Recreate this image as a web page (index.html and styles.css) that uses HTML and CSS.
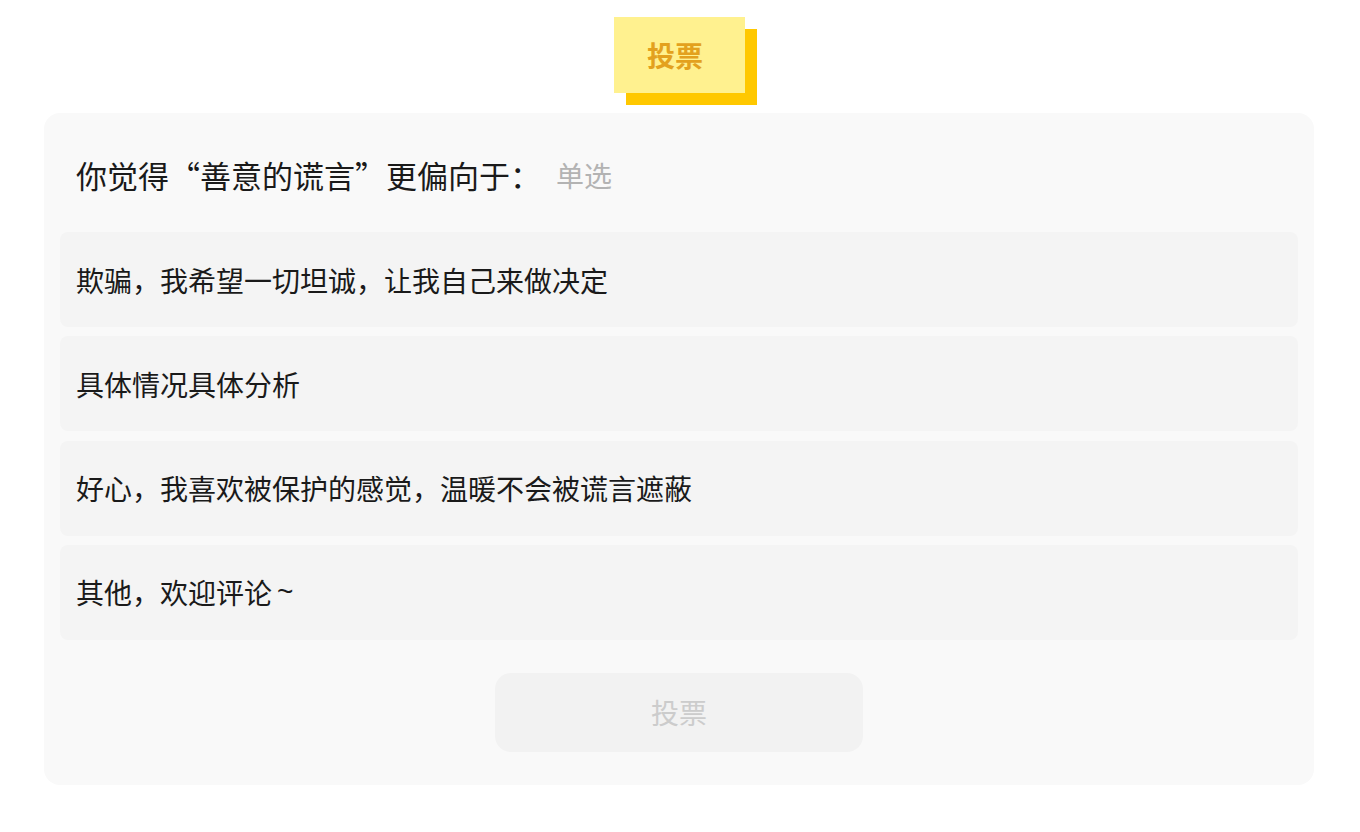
FILE: index.html
```html
<!DOCTYPE html>
<html lang="zh-CN">
<head>
<meta charset="utf-8">
<title>投票</title>
<link rel="stylesheet" href="styles.css">
</head>
<body>
<div class="page">
  <div class="badge-wrap">
    <div class="badge">投票</div>
  </div>
  <div class="card">
    <div class="title-row">
      <span class="title">你觉得“善意的谎言”更偏向于：</span>
      <span class="tag">单选</span>
    </div>
    <div class="options">
      <div class="option">欺骗，我希望一切坦诚，让我自己来做决定</div>
      <div class="option">具体情况具体分析</div>
      <div class="option">好心，我喜欢被保护的感觉，温暖不会被谎言遮蔽</div>
      <div class="option">其他，欢迎评论<span class="tilde">~</span></div>
    </div>
    <div class="actions">
      <button class="vote-btn" type="button">投票</button>
    </div>
  </div>
</div>
</body>
</html>
```
FILE: styles.css
```css
html, body {
  margin: 0;
  padding: 0;
  background: #ffffff;
}
body {
  font-family: "Liberation Sans", "Noto Sans CJK SC", sans-serif;
  color: #1a1a1a;
}
.page {
  padding: 17px 46px 0 44px;
}
.badge-wrap {
  display: flex;
  justify-content: center;
  padding-bottom: 20px;
}
.badge {
  width: 131px;
  height: 76px;
  box-sizing: border-box;
  padding-right: 8px;
  background: #fff18f;
  box-shadow: 12px 12px 0 #ffc800;
  display: flex;
  align-items: center;
  justify-content: center;
  font-size: 28px;
  font-weight: 700;
  color: #e3a11e;
  font-family: "Noto Sans CJK SC", sans-serif;
}
.card {
  background: #f9f9f9;
  border-radius: 16px;
  padding: 0 16px 33px;
}
.title-row {
  display: flex;
  align-items: center;
  height: 119px;
  padding-left: 16px;
  padding-top: 4px;
  box-sizing: border-box;
}
.title {
  font-family: "Noto Sans CJK SC", sans-serif;
  font-size: 31px;
  color: #1a1a1a;
}
.tag {
  margin-left: 15px;
  font-family: "Noto Sans CJK SC", sans-serif;
  font-size: 28px;
  color: #b3b3b3;
}
.options {
  display: flex;
  flex-direction: column;
  gap: 9.33px;
}
.option {
  height: 95px;
  background: #f4f4f4;
  border-radius: 8px;
  display: flex;
  align-items: center;
  padding-left: 16px;
  font-size: 28px;
  color: #1a1a1a;
}
.tilde {
  margin-left: 5px;
}
.actions {
  display: flex;
  justify-content: center;
  padding-top: 33px;
}
.vote-btn {
  width: 368px;
  height: 79px;
  border: none;
  border-radius: 16px;
  background: #f2f2f2;
  color: #cccccc;
  font-size: 28px;
  font-family: "Noto Sans CJK SC", sans-serif;
}
```
